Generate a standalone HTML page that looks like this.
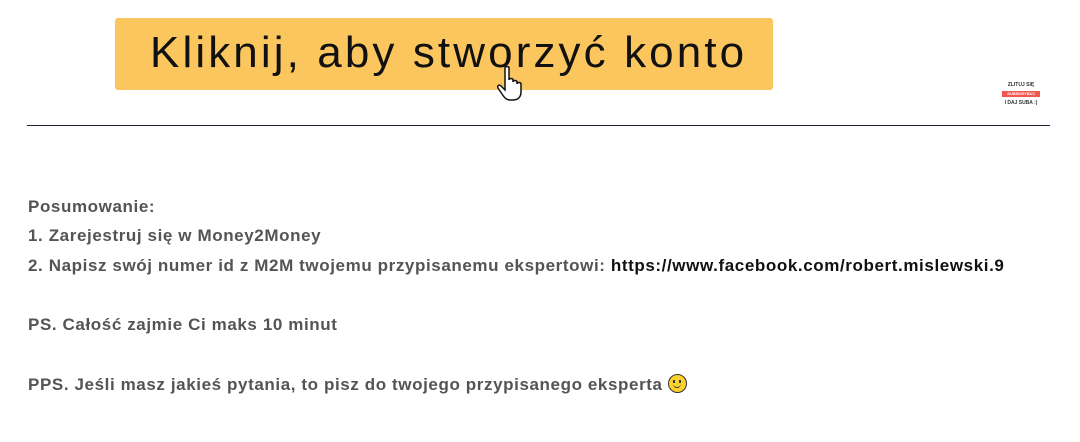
<!DOCTYPE html>
<html><head><meta charset="utf-8"><style>
body{margin:0;width:1080px;height:442px;background:#fff;position:relative;overflow:hidden;font-family:"Liberation Sans",sans-serif}
.btn{position:absolute;left:115px;top:18px;width:658px;height:72px;background:#fcc65f;border-radius:3px}
.btn span{position:absolute;left:35px;top:10px;font-size:44px;color:#111;letter-spacing:3.1px;white-space:nowrap}
.hr{position:absolute;left:27px;top:125px;width:1023px;height:1px;background:#222238}
.t{position:absolute;left:28px;font-size:17px;font-weight:bold;color:#545454;letter-spacing:0.6px;white-space:nowrap}
.t b{color:#111}
.side{position:absolute;left:1001px;top:82px;font-size:5px;font-weight:bold;color:#333;text-align:center;width:40px}
</style></head><body>
<div class="btn"><span>Kliknij, aby stworzyć konto</span></div>
<svg style="position:absolute;left:496px;top:64px" width="30" height="38" viewBox="0 0 30 38"><path d="M9 4c0-2 4-2 4 0v12c0-2 4-2 4 0v2c0-2 4-2 4 0v2c0-2 4-2 4 0v8c0 5-3 8-8 8h-3c-4 0-6-3-8-6l-4-6c-1-2 1-4 3-2l4 4z" fill="#fff" stroke="#111" stroke-width="1.5"/></svg>
<div class="side">ZLITUJ SIĘ<div style="background:#f0584f;color:#fff;margin:3px 1px;height:6px;font-size:4px">SUBSKRYBUJ</div>I DAJ SUBA :)</div>
<div class="hr"></div>
<div class="t" style="top:197px">Posumowanie:</div>
<div class="t" style="top:226px">1. Zarejestruj się w Money2Money</div>
<div class="t" style="top:256px">2. Napisz swój numer id z M2M twojemu przypisanemu ekspertowi: <b>https://www.facebook.com/robert.mislewski.9</b></div>
<div class="t" style="top:315px">PS. Całość zajmie Ci maks 10 minut</div>
<div class="t" style="top:374px">PPS. Jeśli masz jakieś pytania, to pisz do twojego przypisanego eksperta <span style="display:inline-block;width:17px;height:17px;border-radius:50%;background:#fcd22f;border:1px solid #333;vertical-align:-3px;position:relative"><span style="position:absolute;left:4px;top:5px;width:2px;height:3px;background:#333"></span><span style="position:absolute;left:10px;top:5px;width:2px;height:3px;background:#333"></span><span style="position:absolute;left:4px;top:8px;width:8px;height:4px;border-bottom:1.5px solid #333;border-radius:0 0 5px 5px"></span></span></div>
</body></html>
